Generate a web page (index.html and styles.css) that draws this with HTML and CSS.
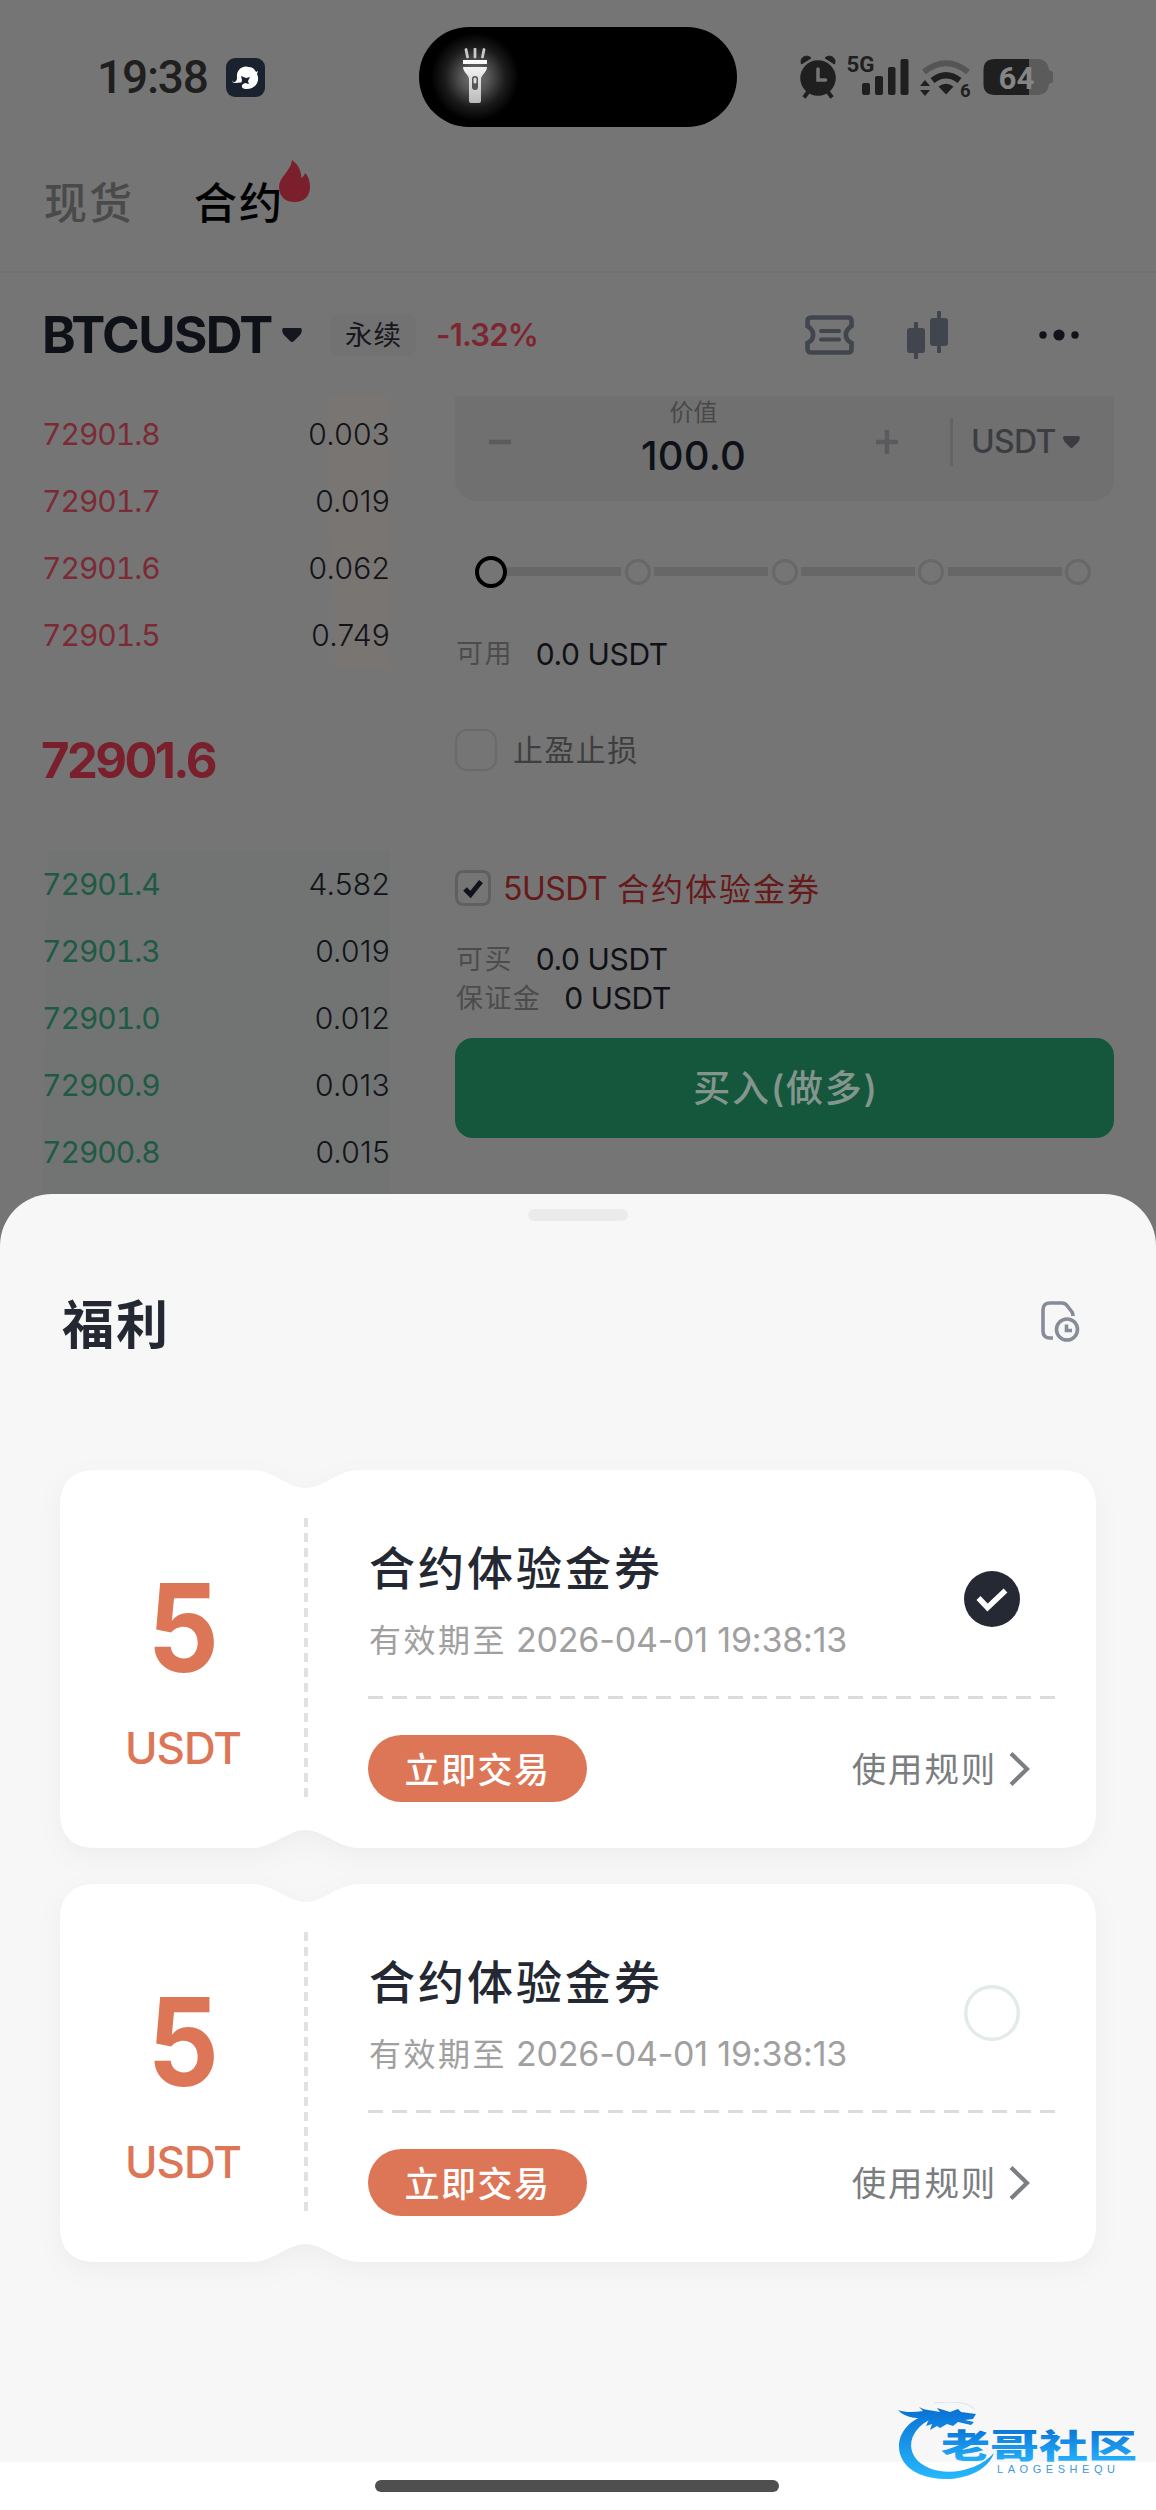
FILE: index.html
```html
<!DOCTYPE html>
<html lang="zh-CN">
<head>
<meta charset="utf-8">
<title>合约</title>
<link rel="stylesheet" href="styles.css">
</head>
<body>
<main class="screen">
  <header class="status">
    <span class="time">19:38</span>
    <svg class="app-icon" width="39" height="39" viewBox="0 0 39 39">
      <rect width="39" height="39" rx="9" fill="#1a2230"/>
      <path d="M6 22C7 26 11 24 11 20C10 11 17 7 23 9C27 9 29 12 30 14L32 13L31 16C35 24 28 32 19 31C15 30 15 27 18 25C14 24 12 25 9 25C7 25 6 24 6 22Z" fill="#fff"/>
      <path d="M15 18L20 20L24 19L22 23L23 26L19 25L15 27L16 22Z" fill="#1a2230"/>
    </svg>
    <div class="island">
      <svg width="26" height="56" viewBox="0 0 26 56">
        <defs><linearGradient id="torch" x1="0" y1="0" x2="0" y2="1"><stop offset="0" stop-color="#fff"/><stop offset="1" stop-color="#b9b9b9"/></linearGradient></defs>
        <path d="M4 1.500L5.500 9M13 1V9M22 1.500L20.500 9" stroke="#c9c9c9" stroke-width="2.800" stroke-linecap="round"/>
        <path d="M1 12H25V16H1ZM1 19H25C25 24 19 27 19 31V53Q19 55 17 55H9Q7 55 7 53V31C7 27 1 24 1 19Z" fill="url(#torch)"/>
        <rect x="10" y="28" width="6" height="14" rx="3" fill="#555"/><rect x="11.500" y="29.500" width="3" height="6" rx="1.500" fill="#ddd"/>
      </svg>
    </div>
    <svg class="sys-icons" width="254" height="64" viewBox="800 45 254 64">
      <g fill="#1f1f1f">
        <circle cx="818" cy="78" r="17.800"/>
        <path d="M801.500 64C799 57 807 54 811 58ZM834.500 64C837 57 829 54 825 58Z" stroke="#1f1f1f" stroke-width="1"/>
        <path d="M808 92L804 97.500M828 92L832 97.500" stroke="#1f1f1f" stroke-width="4"/>
        <path d="M818 69V80H825.500" fill="none" stroke="#757575" stroke-width="3.500" stroke-linecap="round"/>
        <text class="svg-num" x="846.500" y="71.500" font-size="22.500" textLength="28" lengthAdjust="spacingAndGlyphs">5G</text>
        <rect x="862" y="83" width="8" height="12" rx="2"/><rect x="875" y="76" width="8" height="19" rx="2"/><rect x="888" y="67" width="7.500" height="28" rx="2"/><rect x="900.500" y="59" width="8" height="36" rx="2"/>
        <path d="M920 86L925 80L930 86ZM920 90L925 96L930 90Z"/>
        <path d="M924 72Q946 54.500 968 72" fill="none" stroke="#555" stroke-width="6"/>
        <path d="M932.500 80.500Q946 70 959.500 80.500" fill="none" stroke="#1f1f1f" stroke-width="6.500"/>
        <path d="M938.500 86.500Q946 81 953.500 86.500L946 94.500Z"/>
        <text class="svg-num" x="960" y="96.500" font-size="18.500">6</text>
        <path d="M1029 59H1037C1045 59 1048 63 1049 70L1053 72V82L1049 84C1048 91 1045 95 1037 95H1029Z" fill="#5b5b5b"/>
        <path d="M1029 59H995Q983.500 59 983.500 70V84Q983.500 95 995 95H1029Z"/>
        <text class="svg-num" x="998.500" y="88.500" font-size="31" fill="#858585" textLength="36" lengthAdjust="spacingAndGlyphs">64</text>
      </g>
    </svg>
  </header>

  <nav class="tabs">
    <span class="tab">现货</span>
    <span class="tab tab-on">合约<svg class="flame" width="31" height="42" viewBox="0 0 31 42"><path d="M13 0C20 5 22 11 22.500 18C24 17 25.500 15 26 13C29.500 16 31 22 31 27C31 36 25 42 15.500 42C6 42 0 36 0 27C0 17 12 11 13 0Z" fill="#7a1f2b"/></svg></span>
  </nav>

  <section class="pair">
    <h1 class="symbol">BTCUSDT</h1>
    <svg class="caret" width="20" height="14" viewBox="0 0 20 14"><path d="M1 0H19Q21 3 18 7L12 13Q10 15 8 13L2 7Q-1 3 1 0Z" fill="#15171e"/></svg>
    <span class="kind">永续</span>
    <span class="change">-1.32%</span>
    <svg class="ticket" width="49" height="40" viewBox="0 0 49 40" fill="none" stroke="#41454e" stroke-linecap="round">
      <path d="M6 2.500H43Q46.500 2.500 46.500 6V11C39 16 39 24 46.500 28V34Q46.500 37.500 43 37.500H6Q2.500 37.500 2.500 34V28C10 24 10 16 2.500 11V6Q2.500 2.500 6 2.500Z" stroke-width="4.600"/>
      <path d="M16 16H34M16 24.500H34" stroke-width="4"/>
    </svg>
    <svg class="candles" width="41" height="48" viewBox="0 0 41 48" fill="#41454e"><rect y="17" width="18" height="25" rx="3"/><rect x="7" y="11" width="4" height="37" rx="1"/><rect x="23" y="7" width="18" height="28" rx="3"/><rect x="30" width="4" height="42" rx="1"/></svg>
    <svg class="dots" width="40" height="12" viewBox="0 0 40 12" fill="#11131a"><circle cx="4" cy="6" r="3.700"/><circle cx="20" cy="6" r="5.600"/><circle cx="36" cy="6" r="3.700"/></svg>
  </section>

  <section class="trade">
    <div class="book">
      <ul class="asks">
        <li style="background-size:61px 100%"><b>72901.8</b><i>0.003</i></li>
        <li style="background-size:61px 100%"><b>72901.7</b><i>0.019</i></li>
        <li style="background-size:60px 100%"><b>72901.6</b><i>0.062</i></li>
        <li style="background-size:55px 100%"><b>72901.5</b><i>0.749</i></li>
      </ul>
      <p class="last">72901.6</p>
      <ul class="bids">
        <li style="background-size:342px 100%"><b>72901.4</b><i>4.582</i></li>
        <li style="background-size:344px 100%"><b>72901.3</b><i>0.019</i></li>
        <li style="background-size:344px 100%"><b>72901.0</b><i>0.012</i></li>
        <li style="background-size:346px 100%"><b>72900.9</b><i>0.013</i></li>
        <li style="background-size:347px 100%"><b>72900.8</b><i>0.015</i></li>
      </ul>
    </div>

    <div class="order">
      <div class="amount">
        <svg width="22" height="24" viewBox="0 0 22 24"><path d="M0 12H22" stroke="#5b5b5f" stroke-width="4.500"/></svg>
        <div class="value"><span>价值</span><strong>100.0</strong></div>
        <svg width="22" height="24" viewBox="0 0 22 24"><path d="M0 12H22M11 0V24" stroke="#5b5b5f" stroke-width="4.500"/></svg>
        <div class="unit">USDT<svg width="17" height="12" viewBox="0 0 20 14"><path d="M1 0H19Q21 3 18 7L12 13Q10 15 8 13L2 7Q-1 3 1 0Z" fill="#3c3d41"/></svg></div>
      </div>
      <div class="slider"><u class="knob"></u><s></s><u></u><s></s><u></u><s></s><u></u><s></s><u></u></div>
      <p class="line avail"><span>可用</span><em>0.0 USDT</em></p>
      <p class="tpsl"><span class="box"></span><span class="cjk">止盈止损</span></p>
      <p class="voucher"><span class="box box-sm"><svg width="22" height="22" viewBox="0 0 22 22"><path d="M3 12L8.500 17.500L19 4.500" fill="none" stroke="#11131a" stroke-width="5"/></svg></span><span class="coin">5USDT</span><span class="cjk">合约体验金券</span></p>
      <p class="line can"><span>可买</span><em>0.0 USDT</em></p>
      <p class="line margin"><span>保证金</span><em>0 USDT</em></p>
      <button class="buy">买入(做多)</button>
    </div>
  </section>

  <section class="sheet">
    <div class="handle"></div>
    <header class="sheet-head">
      <h2>福利</h2>
      <svg width="39" height="42" viewBox="0 0 39 42" fill="none" stroke="#868d98" stroke-width="3.600">
        <path d="M12 37H9Q2 37 2 30V9Q2 2 9 2H21Q24 2 26 4.500L31 11Q32 12.500 32 15"/>
        <circle cx="26" cy="28.500" r="10.500"/><path d="M25.500 23.500V29.500H31"/>
      </svg>
    </header>

    <article class="card">
      <svg class="card-bg" width="1036" height="378" viewBox="0 0 1036 378"><path d="M36 0H191C214 0 227 18 245.500 18C264 18 277 0 300 0H1000Q1036 0 1036 36V342Q1036 378 1000 378H300C277 378 264 360 245.500 360C227 360 214 378 191 378H36Q0 378 0 342V36Q0 0 36 0Z" fill="#fff"/></svg>
      <div class="sum"><strong>5</strong><span>USDT</span></div>
      <div class="info">
        <div class="top">
          <div><h3>合约体验金券</h3><p>有效期至<time>2026-04-01 19:38:13</time></p></div>
          <svg class="pick" width="56" height="56" viewBox="0 0 56 56"><circle cx="28" cy="28" r="28" fill="#242934"/><path d="M14.500 27L23.500 36.500L41.500 19.500" fill="none" stroke="#fff" stroke-width="5.500"/></svg>
        </div>
        <div class="rule"></div>
        <div class="foot"><button class="go">立即交易</button><span class="terms"><span class="cjk">使用规则</span><svg width="21" height="34" viewBox="0 0 21 34"><path d="M2 1.500L18 17L2 32.500" fill="none" stroke="#7b7e84" stroke-width="4.200"/></svg></span></div>
      </div>
    </article>

    <article class="card">
      <svg class="card-bg" width="1036" height="378" viewBox="0 0 1036 378"><path d="M36 0H191C214 0 227 18 245.500 18C264 18 277 0 300 0H1000Q1036 0 1036 36V342Q1036 378 1000 378H300C277 378 264 360 245.500 360C227 360 214 378 191 378H36Q0 378 0 342V36Q0 0 36 0Z" fill="#fff"/></svg>
      <div class="sum"><strong>5</strong><span>USDT</span></div>
      <div class="info">
        <div class="top">
          <div><h3>合约体验金券</h3><p>有效期至<time>2026-04-01 19:38:13</time></p></div>
          <svg class="pick" width="56" height="56" viewBox="0 0 56 56"><circle cx="28" cy="28" r="26.300" fill="#fff" stroke="#e2eaea" stroke-width="3.400"/></svg>
        </div>
        <div class="rule"></div>
        <div class="foot"><button class="go">立即交易</button><span class="terms"><span class="cjk">使用规则</span><svg width="21" height="34" viewBox="0 0 21 34"><path d="M2 1.500L18 17L2 32.500" fill="none" stroke="#7b7e84" stroke-width="4.200"/></svg></span></div>
      </div>
    </article>
  </section>

  <footer class="home"><span></span></footer>

  <svg class="brand" width="240" height="80" viewBox="898 2402 240 80">
    <defs><linearGradient id="sea" gradientUnits="userSpaceOnUse" x1="0" y1="2410" x2="0" y2="2476"><stop offset="0" stop-color="#0a72d6"/><stop offset="1" stop-color="#25b6fb"/></linearGradient>
    <linearGradient id="word" gradientUnits="userSpaceOnUse" x1="0" y1="2430" x2="0" y2="2462"><stop offset="0" stop-color="#0a78da"/><stop offset="1" stop-color="#25b0fa"/></linearGradient></defs>
    <path d="M930 2414C894 2422 888 2460 919 2474C948 2486 986 2476 994 2453C980 2469 950 2477 929 2468C902 2457 907 2428 934 2418Z" fill="url(#sea)"/>
    <path d="M898 2410C906 2413 915 2412 923 2411L919 2407C926 2411 932 2410 940 2412L937 2408L950 2412L958 2409L961 2412L976 2414L973 2419L965 2420L974 2422L971 2425L958 2422L953 2426L947 2424L940 2428L937 2426L930 2430L932 2424L926 2426L929 2419C918 2418 906 2419 898 2410Z" fill="url(#sea)"/>
    <path d="M934 2403Q965 2399 975 2409" fill="none" stroke="#b9d9ef" stroke-width=".6"/>
    <text class="brand-name" x="941" y="2458" font-size="33" textLength="196" lengthAdjust="spacingAndGlyphs" fill="url(#word)">老哥社区</text>
    <text class="brand-sub" x="997" y="2472.500" font-size="11" textLength="118" fill="#3b9ae4">LAOGESHEQU</text>
  </svg>
</main>
</body>
</html>
```
FILE: styles.css
```css
* { box-sizing: border-box; margin: 0; padding: 0; }
body {
  width: 1156px;
  background: #757575;
  font-family: Inter, "Noto Sans CJK SC", sans-serif;
}
svg { display: block; flex: none; }
button { border: 0; font-family: inherit; }
ul { list-style: none; }
b, i, em, u, s { font-weight: inherit; font-style: normal; text-decoration: none; }
.screen {
  position: relative;
  display: flex;
  flex-direction: column;
  width: 1156px;
  height: 2510px;
  overflow: hidden;
  background: #757575;
}
.cjk { padding-bottom: 3px; }

/* status bar */
.status { display: flex; align-items: center; height: 154px; padding-left: 97px; }
.time { width: 129px; font: 500 46px/60px Roboto, sans-serif; color: #1f1f1f; letter-spacing: -1.200px; }
.island {
  width: 318px;
  height: 100px;
  margin: 0 63px 0 154px;
  padding: 21px 0 0 43px;
  border-radius: 50px;
  background: radial-gradient(circle at 56px 50px, #777 0, #555 14px, #1c1c1c 30px, #000 44px);
}
.svg-num { font-family: Roboto, sans-serif; font-weight: 700; }

/* market tabs */
.tabs {
  display: flex;
  gap: 60px;
  height: 119px;
  padding: 0 0 19px 44px;
  border-bottom: 2px solid #707070;
  line-height: 98px;
  font-size: 43px;
  font-weight: 500;
  letter-spacing: 2px;
  color: #4a4a4a;
}
.tab { position: relative; width: 90px; white-space: nowrap; }
.tab-on { color: #000; }
.flame { position: absolute; left: 85px; top: 6px; }

/* pair header */
.pair { display: flex; align-items: center; height: 123px; padding-left: 42px; line-height: 60px; }
.symbol { width: 240px; font-size: 51px; font-weight: 700; letter-spacing: -1.600px; color: #0f1118; }
.kind {
  width: 85px;
  height: 42px;
  margin-left: 29px;
  border-radius: 8px;
  background: #727272;
  line-height: 42px;
  text-align: center;
  font-size: 27.500px;
  letter-spacing: 1px;
  color: #17181d;
}
.change { width: 130px; margin-left: 20px; font-size: 31px; font-weight: 600; letter-spacing: -.8px; color: #7d2631; }
.ticket { margin-left: 239px; }
.candles { margin-left: 53px; }
.dots { margin-left: 91px; }

/* order book */
.trade { display: flex; gap: 65px; height: 798px; }
.book { width: 390px; padding-left: 43px; font-size: 30px; }
.book li {
  display: flex;
  justify-content: space-between;
  height: 67.100px;
  line-height: 68px;
  background-position: right top;
  background-repeat: no-repeat;
}
.book b { margin-left: -1px; letter-spacing: -1px; font-variant-numeric: tabular-nums; }
.book i { font-weight: 300; color: #121319; letter-spacing: .2px; }
.asks { height: 273px; }
.asks li { background-image: linear-gradient(#797573, #797573); color: #7b2b35; }
.asks li:first-child { height: 71.100px; padding-top: 4px; }
.last { height: 181px; margin-left: -2px; line-height: 183px; font-size: 49px; font-weight: 700; letter-spacing: -2.600px; color: #7a1f2c; }
.bids li { background-image: linear-gradient(#717473, #717473); color: #1f5a44; }
.bids li:last-child { height: 76px; }

/* order form */
.order { width: 659px; }
.amount {
  display: flex;
  align-items: center;
  height: 105px;
  padding: 0 34px 14px;
  border-radius: 0 0 22px 22px;
  background: #707070;
}
.value { display: flex; flex-direction: column; align-items: center; width: 365px; padding-bottom: 3px; }
.value span { font-size: 24px; line-height: 32px; color: #484848; }
.value strong { font-size: 40px; line-height: 54px; font-weight: 500; letter-spacing: .2px; color: #0f1118; }
.unit {
  display: flex;
  align-items: center;
  gap: 7px;
  height: 48px;
  margin-left: 52px;
  padding-left: 18px;
  border-left: 3px solid #646464;
  font-size: 32px;
  font-weight: 500;
  letter-spacing: -.7px;
  color: #3c3d41;
}
.slider { display: flex; align-items: center; justify-content: space-between; height: 141px; padding: 0 23px 0 20px; }
.slider u { width: 26px; height: 26px; border: 3px solid #686868; border-radius: 50%; }
.slider .knob { width: 32px; height: 32px; margin-right: -3px; border: 4.500px solid #000; }
.slider s { width: 114px; height: 9px; background: #676767; }
.line { display: flex; gap: 23px; height: 24px; padding-left: 1px; line-height: 24px; font-size: 27px; color: #4c4c4c; letter-spacing: 1.400px; }
.line em { font-size: 30px; letter-spacing: -.4px; color: #101116; }
.tpsl, .voucher { display: flex; align-items: center; }
.tpsl { gap: 16px; height: 167px; font-size: 30px; letter-spacing: 1.400px; color: #3e3e3e; }
.box { width: 42px; height: 42px; border: 2.500px solid #6a6a6a; border-radius: 12px; }
.box-sm { display: grid; place-items: center; width: 36px; height: 36px; border: 3px solid #606060; border-radius: 8px; }
.voucher { height: 110px; font-size: 32px; letter-spacing: 2px; color: #661a1a; }
.coin { width: 114px; margin-left: 12px; letter-spacing: -.5px; }
.can { height: 33px; line-height: 33px; }
.margin { height: 45px; line-height: 45px; }
.buy {
  width: 659px;
  height: 100px;
  margin-top: 17px;
  padding: 0 0 4px 3px;
  border-radius: 18px;
  background: #14573d;
  font-size: 37px;
  font-weight: 500;
  letter-spacing: 1.700px;
  color: #84958d;
}

/* benefits sheet */
.sheet { height: 1268px; padding: 15px 60px 0; border-radius: 52px 52px 0 0; background: #f7f7f7; }
.handle { width: 100px; height: 12px; margin: 0 auto; border-radius: 6px; background: #ebebeb; }
.sheet-head { display: flex; align-items: center; justify-content: space-between; height: 202px; margin-bottom: 47px; padding: 0 16px 0 2px; }
.sheet-head h2 { padding-bottom: 2px; font-size: 52px; font-weight: 700; letter-spacing: 2px; color: #242832; }
.card { position: relative; display: flex; height: 378px; margin-bottom: 36px; }
.card-bg { position: absolute; left: 0; top: 0; filter: drop-shadow(0 8px 12px rgba(0, 0, 0, .04)); }
.sum, .info { position: relative; }
.sum {
  display: flex;
  flex-direction: column;
  align-items: center;
  width: 248px;
  padding: 88px 2px 0 0;
  background: repeating-linear-gradient(#e1e1e1 0 9px, transparent 9px 15px) right 48px / 4px 279px no-repeat;
  color: #dd7656;
}
.sum strong { font-size: 123px; line-height: 140px; font-weight: 700; transform: scaleX(.91); }
.sum span { margin-top: 20px; font-size: 44px; line-height: 60px; font-weight: 500; letter-spacing: -1px; }
.info { width: 688px; margin-left: 60px; padding-top: 62px; }
.top { display: flex; justify-content: space-between; height: 144px; padding: 0 36px 0 1px; line-height: 72px; }
.top h3 { font-size: 46px; font-weight: 500; letter-spacing: 3px; color: #242832; }
.top p { font-size: 32px; letter-spacing: 2.500px; color: #a0a0a0; white-space: nowrap; }
.top time { margin-left: 9px; font-size: 34px; letter-spacing: -.2px; }
.pick { margin-top: 39px; }
.rule { height: 3px; margin-top: 20px; background: repeating-linear-gradient(90deg, #dcdcdc 0 15px, transparent 15px 24px); }
.foot { display: flex; align-items: center; justify-content: space-between; height: 67px; margin-top: 36px; padding-right: 26px; }
.go { width: 219px; height: 67px; padding-bottom: 3px; border-radius: 34px; background: #dd7656; font-size: 35px; font-weight: 500; letter-spacing: 1.500px; color: #fff; }
.terms { display: flex; align-items: center; gap: 12px; font-size: 34.500px; letter-spacing: 1.800px; color: #7b7d80; }

/* gesture bar and brand mark */
.home { height: 48px; padding-top: 18px; background: #fff; }
.home span { display: block; width: 404px; height: 12px; margin-left: 375px; border-radius: 6px; background: #4f4f4f; }
.brand { position: absolute; left: 898px; top: 2402px; }
.brand-name { font-family: "Noto Sans CJK SC", sans-serif; font-weight: 900; }
.brand-sub { font-family: "Liberation Sans", sans-serif; }
```
